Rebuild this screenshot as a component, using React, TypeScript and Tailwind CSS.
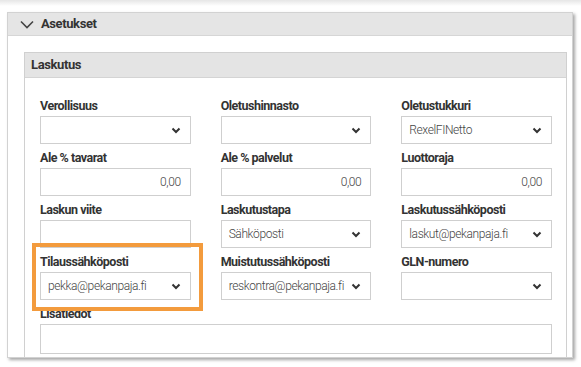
import React from "react";

type Field = {
  label: string;
  value?: string;
  kind: "select" | "number" | "text";
};

const fields: Field[] = [
  { label: "Verollisuus", kind: "select" },
  { label: "Oletushinnasto", kind: "select" },
  { label: "Oletustukkuri", value: "RexelFINetto", kind: "select" },
  { label: "Ale % tavarat", value: "0,00", kind: "number" },
  { label: "Ale % palvelut", value: "0,00", kind: "number" },
  { label: "Luottoraja", value: "0,00", kind: "number" },
  { label: "Laskun viite", kind: "text" },
  { label: "Laskutustapa", value: "Sähköposti", kind: "select" },
  { label: "Laskutussähköposti", value: "laskut@pekanpaja.fi", kind: "select" },
  { label: "Tilaussähköposti", value: "pekka@pekanpaja.fi", kind: "select" },
  { label: "Muistutussähköposti", value: "reskontra@pekanpaja.fi", kind: "select" },
  { label: "GLN-numero", kind: "select" },
];

function Chevron() {
  return (
    <svg width="10" height="7" viewBox="0 0 10 7" className="shrink-0">
      <path d="M1.5 1.5 L5 5 L8.5 1.5" fill="none" stroke="#333" strokeWidth="2" />
    </svg>
  );
}

function Input({ field }: { field: Field }) {
  return (
    <div className="flex flex-col">
      <div className="h-[20px] leading-[20px] text-[12.5px] font-bold text-[#333] tracking-[-0.5px]">{field.label}</div>
      <div
        className={`h-[28px] border border-[#cfcfcf] bg-white flex items-center pl-[7px] pr-[9px] text-[12px] font-light text-[#444] tracking-[-0.4px] ${
          field.kind === "number" ? "justify-end" : "justify-between"
        }`}
      >
        <span className="whitespace-nowrap">{field.value ?? ""}</span>
        {field.kind === "select" && <Chevron />}
      </div>
    </div>
  );
}

export default function App() {
  return (
    <div
      className="relative w-[581px] h-[367px] bg-white overflow-hidden"
      style={{ fontFamily: 'Roboto, "Liberation Sans", sans-serif' }}
    >
      <div className="h-[6px] bg-gradient-to-b from-[#e6e6e6] to-white" />
      <div className="ml-[7px] mt-[6px] w-[566px] h-[346px] border border-[#d2d2d2] bg-white shadow-[2px_2px_3px_rgba(0,0,0,0.35)] flex flex-col">
        {/* Asetukset header */}
        <div className="h-[23px] shrink-0 bg-[#e5e5e5] border-b border-[#d6d6d6] flex items-center pl-[12px] gap-[7px]">
          <svg width="14" height="9" viewBox="0 0 14 9">
            <path d="M1 1.5 L7 7.5 L13 1.5" fill="none" stroke="#444" strokeWidth="1.6" />
          </svg>
          <span className="text-[13px] font-bold text-[#333] tracking-[-0.4px]">Asetukset</span>
        </div>
        <div className="flex-1 pl-[16px] pr-[5px] pt-[16px] overflow-hidden">
          {/* Laskutus panel */}
          <div className="border border-[#d0d0d0] h-[320px]">
            <div className="h-[25px] bg-[#e4e4e4] border-b border-[#d4d4d4] flex items-center pl-[6px] text-[13px] font-bold text-[#333] tracking-[-0.4px]">
              Laskutus
            </div>
            <div className="pl-[15px] pt-[18px] w-[527px] grid grid-cols-3 gap-x-[30px] gap-y-[4px]">
              {fields.map((f) => (
                <Input key={f.label} field={f} />
              ))}
              <div className="col-span-3 flex flex-col">
                <div className="h-[20px] leading-[20px] text-[12.5px] font-bold text-[#333] tracking-[-0.5px]">Lisätiedot</div>
                <div className="h-[30px] border border-[#cfcfcf] bg-white" />
              </div>
            </div>
          </div>
        </div>
      </div>
      {/* highlight */}
      <div className="absolute left-[32px] top-[243px] w-[171px] h-[68px] border-[4px] border-[#f39b3d]" />
    </div>
  );
}
